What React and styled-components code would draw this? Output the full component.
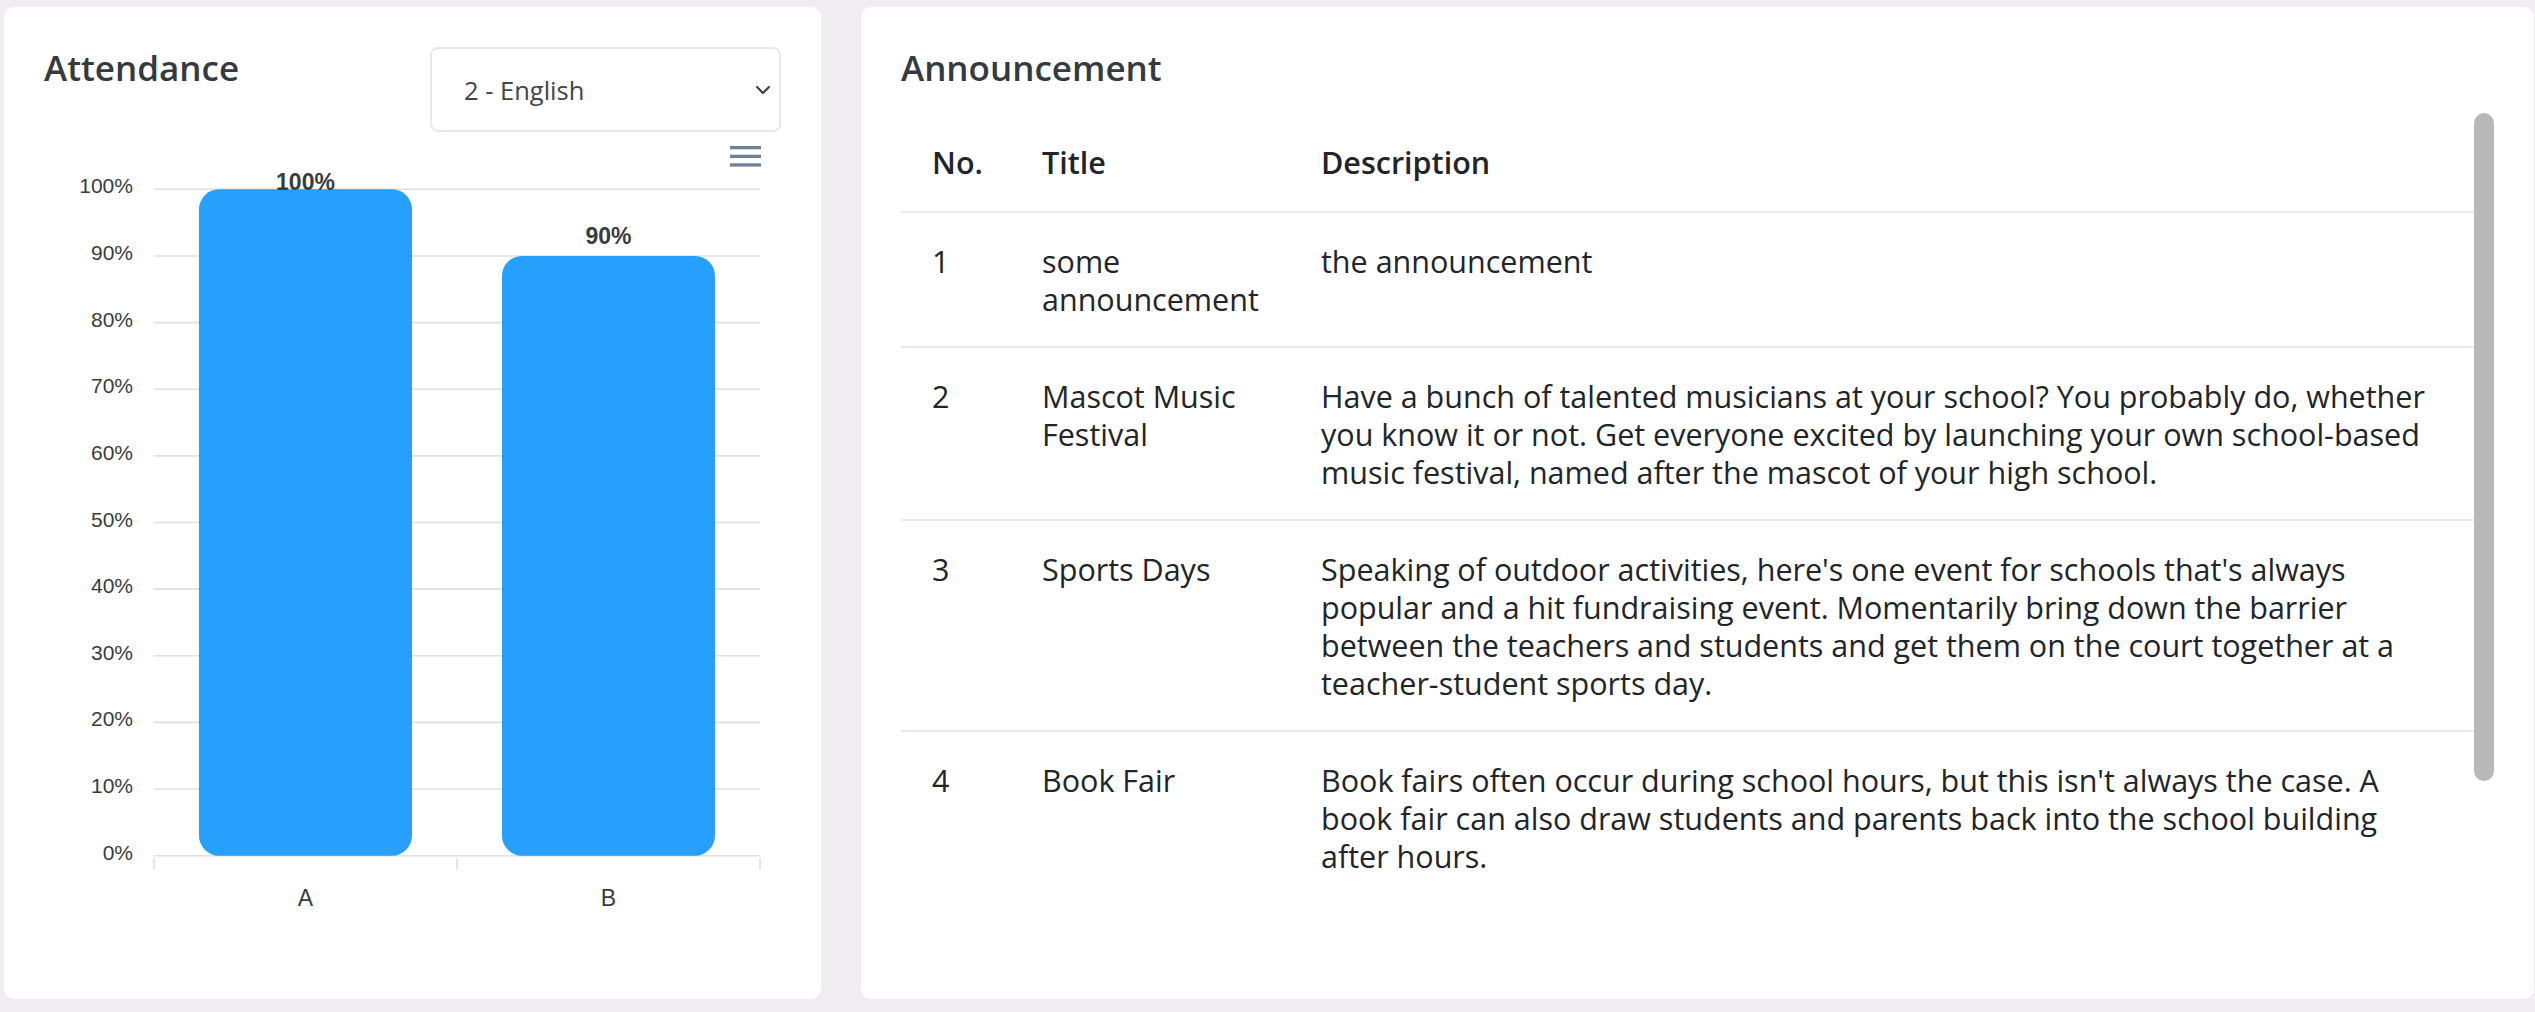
import React from 'react'
import styled, { createGlobalStyle } from 'styled-components'

const GlobalStyle = createGlobalStyle`
  html, body {
    margin: 0;
    padding: 0;
  }
  body {
    background: #f0ecf2;
    font-family: "Open Sans", "Noto Sans", sans-serif;
  }
`

const Page = styled.div`
  display: grid;
  grid-template-columns: 817px 1fr;
  gap: 40px;
  height: 1012px;
  box-sizing: border-box;
  padding: 7px 1px 13px 4px;
`

const Card = styled.section`
  background: #fff;
  border-radius: 10px;
  padding: 40px;
  box-sizing: border-box;
  display: flex;
  flex-direction: column;
  min-width: 0;
`

const CardHeader = styled.div`
  display: flex;
  justify-content: space-between;
  align-items: flex-start;
`

const CardTitle = styled.h2`
  margin: 0;
  font-size: 35px;
  line-height: 42px;
  font-weight: 600;
  color: #343a40;
`

const SelectBox = styled.div`
  width: 351px;
  height: 85px;
  box-sizing: border-box;
  border: 2px solid #e9e8ef;
  border-radius: 8px;
  padding: 0 8px 0 32px;
  display: flex;
  align-items: center;
  justify-content: space-between;
  font-size: 25.5px;
  color: #41464b;
  cursor: pointer;
`

const ChartSvg = styled.svg`
  display: block;
  font-family: "Liberation Sans", Arial, sans-serif;
`

const TableArea = styled.div`
  margin-top: 24px;
  height: 789px;
  display: flex;
  align-items: flex-start;
`

const TableViewport = styled.div`
  flex: 1;
  min-width: 0;
  height: 100%;
  overflow-y: auto;
  scrollbar-width: none;
`

const ScrollTrack = styled.div`
  width: 20px;
  height: 100%;
  flex-shrink: 0;
`

const ScrollThumb = styled.div`
  width: 20px;
  height: ${p => p.$size}px;
  border-radius: 10px;
  background: #b9b8b9;
`

const Table = styled.table`
  width: 100%;
  border-collapse: collapse;
  table-layout: fixed;
  font-size: 30.5px;
  line-height: 38px;
  color: #212529;
  margin-bottom: 140px;
`

const Th = styled.th`
  text-align: left;
  font-weight: 600;
  padding: 30px 31px;
  border-bottom: 2px solid #eae9f0;
`

const Td = styled.td`
  vertical-align: top;
  padding: 28.5px 31px;
  border-bottom: 2px solid #eae9f0;
`

const Line = styled.span`
  display: block;
  white-space: nowrap;
`

const announcements = [
  { no: 1, title: ['some', 'announcement'], desc: ['the announcement'] },
  {
    no: 2,
    title: ['Mascot Music', 'Festival'],
    desc: [
      'Have a bunch of talented musicians at your school? You probably do, whether',
      'you know it or not. Get everyone excited by launching your own school-based',
      'music festival, named after the mascot of your high school.',
    ],
  },
  {
    no: 3,
    title: ['Sports Days'],
    desc: [
      "Speaking of outdoor activities, here's one event for schools that's always",
      'popular and a hit fundraising event. Momentarily bring down the barrier',
      'between the teachers and students and get them on the court together at a',
      'teacher-student sports day.',
    ],
  },
  {
    no: 4,
    title: ['Book Fair'],
    desc: [
      "Book fairs often occur during school hours, but this isn't always the case. A",
      'book fair can also draw students and parents back into the school building',
      'after hours.',
    ],
  },
]

const bars = [
  { label: 'A', value: 100 },
  { label: 'B', value: 90 },
]

// chart geometry (svg local px)
const plotLeft = 110
const plotRight = 716
const plotTop = 57.3
const plotBottom = 723.7
const step = (plotBottom - plotTop) / 10
const catWidth = (plotRight - plotLeft) / bars.length
const barWidth = 213

const AttendanceChart = () => {
  const ticks = Array.from({ length: 11 }, (_, i) => 100 - i * 10)
  return (
    <ChartSvg width="737" height="800" viewBox="0 0 737 800">
      <g fill="#6e8192">
        <rect x="686" y="14" width="31" height="3.3" />
        <rect x="686" y="22.7" width="31" height="3.3" />
        <rect x="686" y="31.3" width="31" height="3.3" />
      </g>
      {ticks.map((t, i) => {
        const y = plotTop + i * step
        return (
          <g key={t}>
            <line x1={plotLeft} x2={plotRight} y1={y} y2={y} stroke="#e0e0e0" strokeWidth="1.6" />
            <text x="89" y={y + 4} textAnchor="end" fontSize="21" fill="#373d3f">
              {t}%
            </text>
          </g>
        )
      })}
      {[0, 1, 2].map(i => (
        <line
          key={i}
          x1={plotLeft + i * catWidth}
          x2={plotLeft + i * catWidth}
          y1={plotBottom + 2}
          y2={plotBottom + 14}
          stroke="#e0e0e0"
          strokeWidth="1.6"
        />
      ))}
      {bars.map((b, i) => {
        const cx = plotLeft + catWidth * i + catWidth / 2
        const top = plotBottom - b.value * step / 10
        return (
          <g key={b.label}>
            <rect
              x={cx - barWidth / 2}
              y={top}
              width={barWidth}
              height={plotBottom - top}
              rx="20"
              fill="#008ffb"
              fillOpacity="0.85"
            />
            <text
              x={cx}
              y={b.value === 100 ? top + 1 : top - 12}
              textAnchor="middle"
              fontSize="23"
              fontWeight="700"
              fill="#373d3f"
            >
              {b.value}%
            </text>
            <text x={cx} y="774" textAnchor="middle" fontSize="23" fill="#373d3f">
              {b.label}
            </text>
          </g>
        )
      })}
    </ChartSvg>
  )
}

const Chevron = () => (
  <svg width="16" height="16" viewBox="0 0 16 16" fill="none">
    <path d="M2 5l6 6 6-6" stroke="#343a40" strokeWidth="2" strokeLinecap="round" strokeLinejoin="round" />
  </svg>
)

const App = () => (
  <>
    <GlobalStyle />
    <Page>
      <Card>
        <CardHeader>
          <CardTitle>Attendance</CardTitle>
          <SelectBox>
            <span>2 - English</span>
            <Chevron />
          </SelectBox>
        </CardHeader>
        <AttendanceChart />
      </Card>
      <Card>
        <CardTitle>Announcement</CardTitle>
        <TableArea>
          <TableViewport>
            <Table>
              <colgroup>
                <col style={{ width: 110 }} />
                <col style={{ width: 279 }} />
                <col />
              </colgroup>
              <thead>
                <tr>
                  <Th>No.</Th>
                  <Th>Title</Th>
                  <Th>Description</Th>
                </tr>
              </thead>
              <tbody>
                {announcements.map(a => (
                  <tr key={a.no}>
                    <Td>{a.no}</Td>
                    <Td>
                      {a.title.map(l => (
                        <Line key={l}>{l}</Line>
                      ))}
                    </Td>
                    <Td>
                      {a.desc.map(l => (
                        <Line key={l}>{l}</Line>
                      ))}
                    </Td>
                  </tr>
                ))}
              </tbody>
            </Table>
          </TableViewport>
          <ScrollTrack>
            <ScrollThumb $size={668} />
          </ScrollTrack>
        </TableArea>
      </Card>
    </Page>
  </>
)

export default App
